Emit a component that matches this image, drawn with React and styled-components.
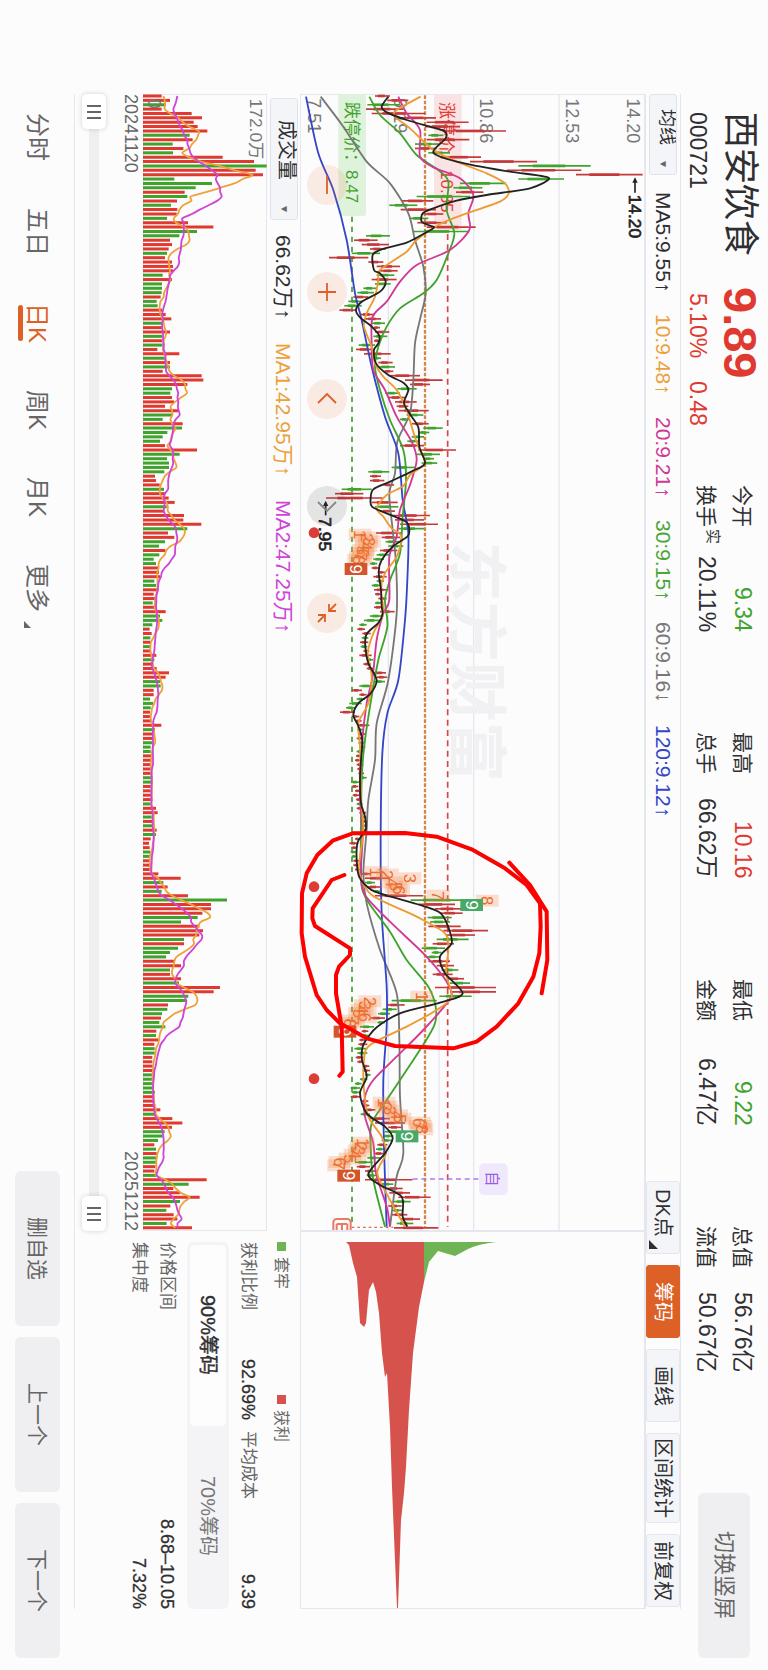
import React, { useState } from 'react';
import styled, { createGlobalStyle, css } from 'styled-components';

const RED = '#e03a30';
const GREEN = '#3fa32c';
const ORANGE = '#dd6126';
const INK = '#2f2f31';
const LINE = '#e6e6ee';

const GlobalStyle = createGlobalStyle`
  *, *::before, *::after { box-sizing: border-box; }
  body { margin: 0; background: #fcfcfd; }
  button, select, input { font: inherit; color: inherit; margin: 0; }
`;

/* The trading screen is a landscape layout, set with vertical lines of sideways text. */
const Page = styled.div`
  writing-mode: vertical-rl;
  text-orientation: sideways;
  display: flex;
  flex-direction: column;
  width: 100vw;
  height: 100vh;
  background: #fcfcfd;
  color: ${INK};
  font-family: 'Liberation Sans', 'Noto Sans CJK SC', sans-serif;
  font-size: 21px;
  line-height: 1;
  white-space: nowrap;
  overflow: hidden;
`;

const Header = styled.header`
  display: flex;
  flex: none;
  block-size: 87px;
  padding-inline: 112px 12px;
`;

const Title = styled.div`
  display: grid;
  grid-template-columns: 175px 198px;
  grid-template-rows: 46px 40px;
  align-items: center;
  padding-block-start: 5px;
`;

const StockName = styled.h1`
  margin: 0;
  font-size: 36px;
  font-weight: 400;
`;

const LastPrice = styled.strong`
  color: ${RED};
  font-size: 47px;
`;

const Code = styled.span`
  font-size: 23px;
`;

const Change = styled.div`
  display: flex;
  gap: 23px;
  padding-inline-start: 6px;
  color: ${RED};
  font-size: 23px;
`;

const Quotes = styled.dl`
  display: flex;
  flex: 1;
  gap: 100px;
  margin: 0;
  padding-block-start: 8px;
`;

const QuotePair = styled.div`
  inline-size: 147px;
`;

const Quote = styled.div`
  display: flex;
  align-items: center;
  justify-content: space-between;
  block-size: 36px;
  dt { display: flex; font-size: 21px; }
  dd { margin: 0; font-size: 23px; color: ${(p) => p.$color || INK}; }
`;

const Flag = styled.small`
  align-self: flex-start;
  margin-block-start: -4px;
  margin-inline-start: 2px;
  font-size: 15px;
`;

const SoftButton = styled.button`
  display: flex;
  align-items: center;
  justify-content: center;
  inline-size: 155px;
  block-size: 45px;
  padding: 0;
  border: 0;
  border-radius: 6px;
  background: #efeff1;
  color: #666;
  font-size: 21px;
  writing-mode: inherit;
`;

const RotateButton = styled(SoftButton)`
  flex: none;
  align-self: flex-start;
  inline-size: 165px;
  block-size: 52px;
  margin-block-start: 18px;
  font-size: 22px;
`;

const Workspace = styled.main`
  display: flex;
  flex: 1;
  flex-direction: column;
  min-block-size: 0;
  margin-inline: 94px 61px;
  border-block-end: 1px solid ${LINE};
`;

const Toolbar = styled.div`
  display: flex;
  flex: none;
  align-items: center;
  justify-content: space-between;
  block-size: 36px;
  border-block: 1px solid ${LINE};
`;

const Legend = styled.div`
  display: flex;
  align-items: center;
  gap: ${(p) => p.$gap || 22}px;
`;

const Reading = styled.span`
  color: ${(p) => p.$color || INK};
`;

const Picker = styled.span`
  position: relative;
  display: flex;
  margin-inline: ${(p) => (p.$inset ? '4px -9px' : '0 -5px')};
  &::after {
    content: '▼';
    position: absolute;
    inset-inline-end: 6px;
    inset-block-start: 9px;
    color: #666;
    font-size: 10px;
    pointer-events: none;
  }
`;

const Select = styled.select`
  appearance: none;
  inline-size: ${(p) => p.$size}px;
  block-size: 28px;
  padding: 0;
  padding-inline-start: ${(p) => p.$start}px;
  border: 1px solid #e1e3e8;
  border-radius: 3px;
  background: #f4f5f8;
  color: ${INK};
  font-size: ${(p) => p.$text}px;
  writing-mode: vertical-rl;
  text-orientation: sideways;
`;

const Tools = styled.div`
  display: flex;
  gap: 11px;
  padding-inline-end: 2px;
`;

const ToolButton = styled.button`
  position: relative;
  display: flex;
  align-items: center;
  justify-content: center;
  inline-size: ${(p) => (p.$wide ? 90 : 73)}px;
  block-size: 34px;
  padding: 0;
  padding-inline-end: ${(p) => (p.$menu ? 10 : 0)}px;
  border: 1px solid #e6e7ec;
  border-radius: 3px;
  background: #f4f5f8;
  color: ${INK};
  font-size: 20px;
  writing-mode: inherit;
  ${(p) => p.$active && css`
    border-color: ${ORANGE};
    background: ${ORANGE};
    color: #fff;
  `}
`;

const Corner = styled.i`
  position: absolute;
  inset-inline-end: 4px;
  inset-block-end: 2px;
  border-style: solid;
  border-width: 9px 0 0 9px;
  border-color: transparent transparent transparent ${INK};
`;

const Body = styled.div`
  display: flex;
  flex: 1;
  min-block-size: 0;
`;

const Charts = styled.section`
  display: flex;
  flex: 1;
  flex-direction: column;
  min-inline-size: 0;
`;

const Chart = styled.div`
  position: relative;
  flex: none;
  block-size: ${(p) => p.$size}px;
  box-shadow: inset 0 0 0 1px ${LINE};
  svg.plot {
    position: absolute;
    inset: 0;
    width: 100%;
    height: 100%;
    overflow: visible;
    writing-mode: horizontal-tb;
    text-orientation: mixed;
  }
`;

const VolumeBar = styled.div`
  display: flex;
  flex: none;
  align-items: center;
  block-size: 33px;
`;

const ChartControls = styled.div`
  position: absolute;
  inset-block-end: -2px;
  inset-inline-start: 71px;
  display: flex;
  gap: 67px;
  padding-block-end: 9px;
`;

const RoundButton = styled.button`
  display: flex;
  align-items: center;
  justify-content: center;
  inline-size: 40px;
  block-size: 40px;
  padding: 0;
  border: 0;
  border-radius: 50%;
  background: ${(p) => (p.$muted ? 'rgba(60,60,60,.12)' : 'rgba(233,120,60,.13)')};
  color: ${(p) => (p.$muted ? '#888' : ORANGE)};
`;

const Dates = styled.div`
  display: flex;
  flex: none;
  align-items: center;
  justify-content: space-between;
  block-size: 24px;
  color: #666;
  font-size: 18px;
`;

const Scroller = styled.div`
  position: relative;
  flex: 1;
  &::before {
    content: '';
    position: absolute;
    inset-block: 20px 14px;
    inset-inline: 10px;
    background: #efeff2;
  }
`;

const Handle = styled.input`
  position: absolute;
  appearance: none;
  inset-inline: 0;
  inset-block-end: 7px;
  inline-size: 100%;
  block-size: 24px;
  background: transparent;
  pointer-events: none;
  writing-mode: vertical-rl;
  &::-webkit-slider-thumb {
    appearance: none;
    width: 24px;
    height: 35px;
    border-radius: 5px;
    background:
      linear-gradient(#666, #666) center 11px / 14px 2px,
      linear-gradient(#666, #666) center 17px / 14px 2px,
      linear-gradient(#666, #666) center 23px / 14px 2px,
      #fff;
    background-repeat: no-repeat;
    box-shadow: 0 0 5px rgba(40, 40, 60, 0.2);
    pointer-events: auto;
  }
`;

const ChipPanel = styled.aside`
  display: flex;
  flex: none;
  flex-direction: column;
  inline-size: 378px;
`;

const Stats = styled.div`
  display: flex;
  flex-direction: column;
  padding-block-start: 10px;
  padding-inline-start: 11px;
  color: #666;
  font-size: 17px;
`;

const ChipLegend = styled.div`
  display: grid;
  grid-template-columns: 153px 1fr;
  block-size: 18px;
  align-items: center;
  margin-block-end: 10px;
  font-size: 16px;
  span { display: flex; align-items: center; gap: 6px; }
`;

const Swatch = styled.i`
  inline-size: 9px;
  block-size: 9px;
  background: ${(p) => p.$color};
`;

const StatRow = styled.dl`
  display: flex;
  align-items: center;
  block-size: 28px;
  margin: 0;
  dt { flex: none; }
  dd { flex: 1; margin: 0; text-align: end; color: ${INK}; font-size: 18px; -webkit-text-stroke: .3px ${INK}; }
  dd + dt { margin-inline-start: 11px; }
`;

const Segments = styled.div`
  display: flex;
  block-size: 42px;
  margin-block: 5px 6px;
  padding: 3px;
  border-radius: 6px;
  background: #f4f4f7;
  font-size: 20px;
`;

const Segment = styled.label`
  position: relative;
  display: flex;
  flex: 1;
  align-items: center;
  justify-content: center;
  border-radius: 5px;
  color: #777;
  input { position: absolute; inset: 0; opacity: 0; }
  ${(p) => p.$active && css`
    background: #fdfdfe;
    color: ${INK};
    -webkit-text-stroke: 0.4px ${INK};
  `}
`;

const Footer = styled.footer`
  display: flex;
  flex: none;
  align-items: center;
  justify-content: space-between;
  block-size: 74px;
  padding-inline: 113px 12px;
`;

const Periods = styled.nav`
  display: flex;
  gap: 47px;
`;

const Period = styled.button`
  position: relative;
  padding: 0;
  border: 0;
  background: none;
  color: ${(p) => (p.$active ? ORANGE : '#666')};
  font-size: 24px;
  line-height: 28px;
  writing-mode: inherit;
  ${(p) => p.$active && css`
    &::after {
      content: '';
      position: absolute;
      inset-block-end: -5px;
      inset-inline: 2px;
      block-size: 5px;
      border-radius: 3px;
      background: ${ORANGE};
    }
  `}
`;

const MoreMark = styled.i`
  position: absolute;
  inset-inline-end: -16px;
  inset-block-end: 1px;
  border-style: solid;
  border-width: 7px 0 0 7px;
  border-color: transparent transparent transparent #666;
`;

const Pager = styled.div`
  display: flex;
  gap: 11px;
`;

/* Daily volume; a minus sign marks a falling day. Three units to the pixel. */
const volume = [
  56, 81, -69, 56, 146, 177, 152, 164, 193, -140, 149, -89, 121, -90, 239, 333, -371, 338, 360, -94,
  -207, -158, 125, -133, 102, -84, 103, 101, -72, 135, 211, -162, -109, 81, 87, 77, -72, 66, 87, 90,
  90, -59, 87, -57, -57, -56, 53, -41, -44, 57, 68, 85, -57, 57, 81, -57, 57, -59, 43, 109,
  -67, 81, -81, 59, 176, 181, 133, -87, -82, 87, 93, 66, 107, -87, -59, 119, -117, -73, -59, -51,
  66, 162, -110, -72, -78, -78, -64, 36, 39, 50, -63, 67, 77, 95, -71, 63, 123, 121, 175, -133,
  75, 94, -66, -48, 67, -49, -32, -39, 46, 48, 51, -34, -39, 43, 32, 36, -29, 33, 68, -51,
  -58, -28, 20, 26, -22, 23, -21, 21, 40, -34, 31, 41, 78, 68, -51, -53, 32, 32, -21, -30,
  -23, 21, 21, 26, 55, -36, 31, 31, -28, -23, -23, 24, 24, 24, 25, 27, -29, -30, 23, 23,
  24, 28, -23, 39, 44, -26, 30, -28, 41, -39, 23, 18, 20, -21, -21, 22, 22, 23, 46, 113,
  -61, 74, -56, 135, -252, 204, 204, 178, -164, -114, 169, 180, 169, -123, 123, -105, -81, -69, 93, 114,
  -81, 81, 114, -108, 231, 212, -136, -129, 75, -73, -57, 54, -49, -67, 40, -39, 46, 34, -35, -35,
  28, 28, 29, 29, -29, -29, -30, -32, -36, 34, 34, 37, 52, -35, 88, 118, 87, -65, -59, -45,
  34, -39, 41, -43, -41, 37, 34, -39, 191, -137, 91, 111, 170, -111, 82, -70, 92, 103, -71, 147,
];

/* Low and high of each day. */
const range = [
  225, 270, 262, 325, 202, 300, 198, 310, 215, 375, 300, 408, 380, 506, 375, 480, 430, 618, 385, 430,
  380, 508, 345, 420, 345, 410, 385, 450, 430, 543, 510, 711, 655, 872, 620, 844, 828, 1028, 655, 792,
  480, 618, 460, 547, 468, 550, 350, 510, 305, 400, 268, 352, 302, 408, 370, 430, 328, 385, 352, 440,
  380, 527, 340, 505, 198, 270, 162, 233, 185, 267, 210, 258, 155, 240, 87, 205, 205, 250, 230, 300,
  240, 293, 230, 283, 215, 290, 225, 272, 190, 230, 172, 222, 160, 205, 145, 190, 133, 185, 118, 170,
  180, 225, 195, 243, 215, 255, 220, 240, 225, 268, 220, 262, 222, 240, 176, 225, 168, 225, 192, 272,
  220, 243, 235, 278, 235, 285, 250, 280, 268, 360, 315, 428, 330, 390, 292, 350, 255, 300, 265, 315,
  285, 350, 290, 325, 295, 386, 320, 370, 300, 328, 335, 386, 370, 428, 355, 388, 335, 372, 322, 358,
  300, 372, 355, 468, 350, 420, 370, 402, 365, 412, 275, 345, 205, 268, 210, 243, 210, 253, 250, 282,
  125, 215, 105, 190, 78, 248, 215, 293, 225, 295, 240, 285, 275, 390, 285, 372, 300, 414, 295, 372,
  228, 305, 245, 300, 257, 300, 265, 310, 240, 292, 230, 270, 220, 252, 210, 232, 215, 240, 235, 255,
  220, 260, 230, 252, 215, 245, 222, 265, 225, 245, 235, 260, 225, 245, 222, 250, 240, 284, 210, 250,
  192, 240, 178, 200, 172, 195, 187, 212, 185, 205, 180, 205, 182, 202, 190, 208, 178, 215, 200, 220,
  190, 213, 200, 222, 222, 258, 230, 262, 225, 255, 178, 222, 155, 186, 178, 200, 170, 195, 148, 185,
  138, 165, 120, 165, 155, 178, 165, 185, 172, 208, 172, 190, 175, 195, 170, 190, 175, 192, 180, 196,
  170, 190, 168, 186, 165, 182, 170, 190, 172, 186, 175, 192, 178, 200, 153, 180, 155, 175, 165, 182,
  158, 178, 168, 186, 170, 188, 170, 190, 178, 198, 185, 200, 185, 202, 186, 200, 186, 200, 178, 195,
  165, 180, 148, 175, 155, 172, 152, 170, 155, 170, 160, 178, 160, 178, 165, 185, 185, 212, 195, 270,
  195, 225, 202, 242, 220, 242, 225, 370, 332, 515, 355, 465, 405, 490, 420, 488, 383, 455, 390, 450,
  385, 482, 430, 564, 440, 525, 410, 506, 398, 462, 365, 435, 395, 425, 380, 420, 385, 450, 410, 462,
  425, 475, 398, 458, 440, 492, 450, 510, 405, 588, 450, 588, 418, 515, 275, 410, 260, 314, 248, 290,
  234, 270, 210, 255, 232, 255, 180, 222, 185, 205, 185, 205, 178, 195, 175, 202, 163, 198, 172, 202,
  167, 190, 172, 192, 188, 208, 188, 210, 195, 212, 180, 202, 165, 185, 152, 180, 155, 180, 152, 182,
  185, 205, 190, 208, 195, 226, 182, 210, 210, 270, 225, 315, 265, 305, 255, 310, 250, 280, 245, 275,
  232, 262, 228, 255, 222, 255, 202, 242, 165, 218, 170, 210, 195, 230, 200, 232, 195, 338, 240, 280,
  260, 308, 268, 330, 295, 392, 280, 332, 265, 305, 275, 308, 275, 322, 300, 360, 290, 340, 282, 415,
];

const averages = [
  ['#777777', [62,50,130,140,200,245,270,310,325,400,345,480,370,560,377,640,362,710,345,790,340,900,330,1000,292,1085,285,1180,268,1240,278,1350,288,1450,290,1600,265,1800,230,1930,225,2040,205,2160,200,2250,190,2380,200,2470,240,2610,290,2740,298,2878,300,3050,310,3220,290,3290,270,3440]],
  ['#3446c8', [18,50,55,220,100,330,140,480,165,640,185,720,215,860,255,1010,295,1120,308,1260,325,1360,322,1500,315,1620,295,1800,262,1900,247,2020,242,2280,245,2500,260,2720,260,2840,250,3000,252,3200,260,3440]],
  [GREEN, [208,50,240,105,300,160,350,225,415,270,445,305,440,390,463,460,445,520,410,600,370,640,300,685,260,740,235,800,225,860,240,930,270,1020,310,1110,318,1200,308,1310,300,1420,270,1500,255,1560,262,1640,235,1740,215,1850,195,1980,185,2100,183,2380,198,2455,270,2555,320,2640,385,2720,407,2780,405,2830,380,2878,340,2940,260,3060,215,3130,212,3200,220,3300,255,3440]],
  ['#cf3a94', [295,50,320,100,360,150,360,230,400,262,480,295,520,345,505,400,508,450,450,510,350,555,300,605,260,665,218,710,215,790,220,870,255,930,290,1010,335,1085,350,1140,330,1215,300,1290,290,1370,268,1430,268,1560,250,1600,230,1680,218,1790,200,1870,185,2000,180,2150,188,2260,183,2380,195,2445,270,2525,370,2620,430,2690,455,2740,440,2770,370,2850,290,2930,220,3000,195,3050,195,3110,220,3190,228,3280,260,3380,270,3440]],
  ['#ee9a30', [362,50,290,90,285,110,330,145,400,210,470,245,560,280,615,310,626,340,600,365,500,400,420,432,350,480,320,515,240,570,235,600,225,650,200,700,192,740,215,800,225,850,250,890,290,930,320,990,335,1040,355,1100,375,1150,330,1185,310,1218,260,1245,230,1285,250,1310,275,1345,305,1370,290,1430,255,1480,243,1530,250,1600,220,1660,203,1720,215,1790,205,1870,175,1930,180,2000,183,2150,190,2250,180,2330,178,2380,215,2445,350,2510,435,2560,445,2610,438,2680,455,2750,410,2790,320,2840,210,2895,192,2940,192,3030,205,3110,245,3170,258,3220,232,3280,270,3360,315,3440]],
  ['#222222', [265,50,245,80,262,98,320,120,400,143,435,155,437,175,400,218,470,245,610,272,725,288,746,298,690,325,560,345,470,362,400,385,368,400,365,425,385,435,402,443,370,462,320,488,245,508,218,525,222,570,240,580,257,605,240,635,185,665,168,690,180,712,215,740,238,768,235,790,222,810,228,850,265,885,310,908,325,930,312,968,328,1000,355,1042,358,1100,375,1150,340,1172,270,1205,220,1228,212,1255,216,1280,260,1300,318,1325,328,1350,322,1370,280,1398,245,1440,236,1475,243,1530,245,1580,248,1600,236,1628,200,1662,196,1700,205,1750,230,1800,212,1840,175,1870,160,1905,175,1938,187,1980,183,2040,180,2100,183,2170,195,2210,197,2250,172,2290,172,2365,183,2400,225,2435,350,2472,420,2498,445,2542,455,2590,420,2630,435,2680,488,2740,420,2768,300,2800,232,2840,205,2870,188,2900,186,2940,200,2990,180,3040,200,3100,255,3140,278,3175,255,3220,205,3282,240,3315,305,3350,308,3410,322,3440]],
];

const STEP = 13.11;

/* Rounded line through a flat list of x, y pairs. */
function curve(flat) {
  const p = [];
  for (let i = 0; i < flat.length; i += 2) p.push([flat[i], flat[i + 1]]);
  let d = `M${p[0]}`;
  for (let i = 0; i < p.length - 1; i++) {
    const a = p[i - 1] || p[i];
    const b = p[i];
    const c = p[i + 1];
    const e = p[i + 2] || c;
    d += `C${b[0] + (c[0] - a[0]) / 7} ${b[1] + (c[1] - a[1]) / 7} ${c[0] - (e[0] - b[0]) / 7} ${c[1] - (e[1] - b[1]) / 7} ${c}`;
  }
  return d;
}

function movingAverage(days, before) {
  const out = [];
  volume.forEach((_, i) => {
    let sum = 0;
    for (let k = i - days + 1; k <= i; k++) sum += k < 0 ? before : Math.abs(volume[k]);
    out.push(sum / days, 6 + i * STEP);
  });
  return out;
}

function Label({ x, y, size = 54, children, ...rest }) {
  return (
    <text transform={`translate(${x} ${y}) rotate(90)`} fontSize={size} fill="#777" {...rest}>
      {children}
    </text>
  );
}

function Mark({ x, y, digit, fill }) {
  return (
    <g>
      <rect x={x - 34} y={y - 18} width="68" height="36" fill={fill || '#f58a4b'} opacity={fill ? 1 : 0.27} />
      <Label x={x - 18} y={y} size={50} textAnchor="middle" fill={fill ? '#fff' : '#ec6a2c'}>{digit}</Label>
    </g>
  );
}

const marks = [
  [180, 1364, 1], [200, 1373, 2], [208, 1385, 3], [198, 1398, 4], [190, 1410, 5], [188, 1420, 6], [182, 1430, 7], [176, 1440, 8],
  [228, 2376, 1], [262, 2384, 2], [330, 2395, 3], [275, 2408, 4], [288, 2420, 5], [296, 2430, 6], [415, 2447, 7], [562, 2462, 8],
  [365, 2750, 1], [210, 2764, 2], [196, 2776, 3], [186, 2788, 4], [178, 2800, 5], [196, 2812, 6], [160, 2822, 7], [150, 2830, 8],
  [252, 3068, 1], [258, 3080, 2], [270, 3092, 3], [290, 3106, 4], [300, 3116, 5], [358, 3128, 6], [362, 3138, 7], [366, 3148, 8],
  [190, 3188, 1], [184, 3200, 2], [178, 3212, 3], [165, 3224, 4], [150, 3236, 5], [120, 3246, 6], [116, 3256, 7],
];

function PricePlot() {
  return (
    <svg className="plot" viewBox="0 42 1035 3411" preserveAspectRatio="xMinYMin meet" role="img" aria-label="日K线图">
      <g stroke={LINE} strokeWidth="4">
        {[265, 521, 777].map((x) => <path key={x} d={`M${x} 42V3453`} />)}
        <path d="M417 2780V3453" />
      </g>
      <Label x={464} y={1385} size={180} fill="#f1f1f3" fontWeight="700">东方财富</Label>
      <Label x={980} y={55}>14.20</Label>
      <Label x={797} y={55}>12.53</Label>
      <Label x={540} y={55}>10.86</Label>
      <Label x={283} y={55}>9.19</Label>
      <Label x={25} y={55}>7.51</Label>
      <rect x="402" y="42" width="83" height="408" fill="#fae3e4" />
      <rect x="115" y="42" width="83" height="366" rx="8" fill="#dff2dc" />
      <Label x={424} y={66} size={51} fill={RED}>涨停价：10.35</Label>
      <Label x={137} y={66} size={51} fill={GREEN}>跌停价：8.47</Label>
      <path d="M443 462V3440" stroke="#d84545" strokeWidth="5" strokeDasharray="18 13" />
      <path d="M156 410V3440" stroke={GREEN} strokeWidth="5" strokeDasharray="16 14" />
      <path d="M375 46V3440" stroke="#d2874a" strokeWidth="7" strokeDasharray="11 5" />
      {volume.map((v, i) => {
        const lo = range[i * 2];
        const hi = range[i * 2 + 1];
        const y = 48 + i * STEP;
        const color = v > 0 ? '#c43a3a' : GREEN;
        return (
          <g key={i} stroke={color}>
            <path d={`M${lo} ${y}H${hi}`} strokeWidth="5" />
            <path d={`M${lo + (hi - lo) * 0.2} ${y}H${hi - (hi - lo) * 0.35}`} strokeWidth="8" />
          </g>
        );
      })}
      {averages.map(([color, points]) => (
        <path key={color} d={curve(points)} fill="none" stroke={color} strokeWidth="5.5" strokeLinejoin="round" />
      ))}
      {marks.map(([x, y, digit]) => <Mark key={y} x={x} y={y} digit={digit} />)}
      <Mark x={168} y={1467} digit={9} fill="#d4552c" />
      <Mark x={135} y={2855} digit={9} fill="#d4552c" />
      <Mark x={146} y={3287} digit={9} fill="#d4552c" />
      <Mark x={515} y={2475} digit={9} fill="#48a866" />
      <Mark x={321} y={3169} digit={9} fill="#48a866" />
      <g fill="#222">
        <path d="M1005 302V338" stroke="#222" strokeWidth="5" />
        <path d="M1005 292l-8 16h16z" />
        <Label x={987} y={344} size={52} fill="#222" stroke="#222" strokeWidth="2">14.20</Label>
        <path d="M77 1270V1306" stroke="#222" strokeWidth="5" />
        <path d="M77 1262l-8 16h16z" />
        <Label x={58} y={1312} size={52} fill="#222" stroke="#222" strokeWidth="2">7.95</Label>
      </g>
      {[1358, 2420, 2996].map((y) => <circle key={y} cx="42" cy={y} r="16" fill="#dc3c35" />)}
      <path d="M338 3297H537" stroke="#ad7bf0" strokeWidth="5" strokeDasharray="15 11" />
      <rect x="537" y="3250" width="86" height="95" rx="14" fill="#f0e9fc" />
      <Label x={561} y={3297} size={46} textAnchor="middle" fill="#9b5de8">自</Label>
      <path d="M155 3442H280" stroke="#e06a55" strokeWidth="4" strokeDasharray="8 9" />
      <path d="M100 3450V3427a10 10 0 0 1 10-10h32a10 10 0 0 1 10 10v23M110 3432h32M126 3432v18M110 3432v18M142 3432v18" fill="none" stroke="#ea7a66" strokeWidth="6" />
      <g fill="none" stroke="#fb0200" strokeWidth="12" strokeLinecap="round" strokeLinejoin="round">
        <path d="M20 2380L52 2325 98 2282 158 2260 315 2259 410 2270 515 2308 615 2365 680 2415 720 2470 722 2540 718 2620 700 2690 655 2770 590 2840 530 2885 460 2905 285 2898 200 2875 120 2830 80 2790 50 2745 15 2630 5 2560 6 2440z" />
        <path d="M628 2348L690 2415 740 2495 742 2640 725 2740" />
        <path d="M133 2385L95 2400 38 2485 37 2515 45 2538 150 2605 150 2625 117 2660 108 2685 108 2740 125 2840 128 2975 118 2987" />
      </g>
    </svg>
  );
}

function VolumePlot() {
  return (
    <svg className="plot" viewBox="0 0 372 3411" preserveAspectRatio="xMinYMin meet" role="img" aria-label="成交量图">
      <Label x={320} y={14} size={52}>172.0万</Label>
      {volume.map((v, i) => (
        <path key={i} d={`M0 ${6 + i * STEP}H${Math.abs(v)}`} stroke={v > 0 ? RED : GREEN} strokeWidth="9" />
      ))}
      <Label x={14} y={14}>0</Label>
      <path d={curve(movingAverage(5, 63))} fill="none" stroke="#eea23c" strokeWidth="5.5" />
      <path d={curve(movingAverage(10, 108))} fill="none" stroke="#cf45d8" strokeWidth="5.5" />
    </svg>
  );
}

function ChipPlot() {
  return (
    <svg className="plot" viewBox="300 1231 345 378" preserveAspectRatio="xMinYMin meet" role="img" aria-label="筹码分布">
      <path fill="#d5524d" d="M346 1242L349 1245 353 1263 357 1277 360 1323 362 1325 364 1327 366 1323 369 1290 373 1282 376 1292 379 1313 382 1353 385 1377 387 1373 390 1427 392 1487 395 1560 397 1608H398L401 1520 404 1493 406 1467 409 1410 413 1353 419 1307 424 1282V1242z" />
      <path fill="#70b354" d="M424 1242H496Q478 1244 468 1249L455 1256 438 1251 429 1262 424 1282z" />
    </svg>
  );
}

const icons = [
  ['缩小', 'M10 1v18'],
  ['放大', 'M10 1v18M1 10h18'],
  ['左移', 'M1 14l9-9 9 9'],
  ['右移', 'M1 6l9 9 9-9'],
  ['收起', 'M19 1l-7 7M12 1v7h7M1 19l7-7M1 12h7v7'],
];

const legend = [
  ['MA5:9.55↑', INK], ['10:9.48↑', '#eda13c'], ['20:9.21↑', '#cf3a94'],
  ['30:9.15↑', '#4aa636'], ['60:9.16↓', '#777'], ['120:9.12↑', '#3446c8'],
];

const quotes = [
  [['今开', '9.34', GREEN], ['换手', '20.11%', null, '实']],
  [['最高', '10.16', RED], ['总手', '66.62万']],
  [['最低', '9.22', GREEN], ['金额', '6.47亿']],
  [['总值', '56.76亿'], ['流值', '50.67亿']],
];

export default function App() {
  const [period, setPeriod] = useState('日K');
  const [share, setShare] = useState('90');
  return (
    <Page>
      <GlobalStyle />
      <Header>
        <Title>
          <StockName>西安饮食</StockName>
          <LastPrice>9.89</LastPrice>
          <Code>000721</Code>
          <Change><span>5.10%</span><span>0.48</span></Change>
        </Title>
        <Quotes>
          {quotes.map((pair) => (
            <QuotePair key={pair[0][0]}>
              {pair.map(([name, value, color, flag]) => (
                <Quote key={name} $color={color}>
                  <dt>{name}{flag && <Flag>{flag}</Flag>}</dt>
                  <dd>{value}</dd>
                </Quote>
              ))}
            </QuotePair>
          ))}
        </Quotes>
        <RotateButton>切换竖屏</RotateButton>
      </Header>
      <Workspace>
        <Toolbar>
          <Legend>
            <Picker>
              <Select aria-label="主图指标" $size={81} $start={14} $text={18}><option>均线</option></Select>
            </Picker>
            {legend.map(([text, color]) => <Reading key={text} $color={color}>{text}</Reading>)}
          </Legend>
          <Tools>
            <ToolButton $menu>DK点<Corner /></ToolButton>
            <ToolButton $active>筹码</ToolButton>
            <ToolButton>画线</ToolButton>
            <ToolButton $wide>区间统计</ToolButton>
            <ToolButton>前复权</ToolButton>
          </Tools>
        </Toolbar>
        <Body>
          <Charts>
            <Chart $size={345}>
              <PricePlot />
              <ChartControls>
                {icons.map(([name, d], i) => (
                  <RoundButton key={name} aria-label={name} $muted={i === 3}>
                    <svg width="20" height="20" viewBox="0 0 20 20" fill="none" stroke="currentColor" strokeWidth="1.8"><path d={d} /></svg>
                  </RoundButton>
                ))}
              </ChartControls>
            </Chart>
            <VolumeBar>
              <Legend $gap={24}>
                <Picker $inset>
                  <Select aria-label="副图指标" $size={122} $start={21} $text={20}><option>成交量</option></Select>
                </Picker>
                <Reading>66.62万↑</Reading>
                <Reading $color="#eda13c">MA1:42.95万↑</Reading>
                <Reading $color="#cf45d8">MA2:47.25万↑</Reading>
              </Legend>
            </VolumeBar>
            <Chart $size={124}><VolumePlot /></Chart>
            <Dates><time>20241120</time><time>20251212</time></Dates>
            <Scroller>
              <Handle type="range" aria-label="开始日期" min="0" max="100" defaultValue="0" />
              <Handle type="range" aria-label="结束日期" min="0" max="100" defaultValue="100" />
            </Scroller>
          </Charts>
          <ChipPanel>
            <Chart $size={345}><ChipPlot /></Chart>
            <Stats>
              <ChipLegend>
                <span><Swatch $color="#70b354" />套牢</span>
                <span><Swatch $color="#d5524d" />获利</span>
              </ChipLegend>
              <StatRow>
                <dt>获利比例</dt><dd>92.69%</dd>
                <dt>平均成本</dt><dd>9.39</dd>
              </StatRow>
              <Segments role="radiogroup" aria-label="筹码范围">
                {['90', '70'].map((n) => (
                  <Segment key={n} $active={share === n}>
                    <input type="radio" name="share" checked={share === n} onChange={() => setShare(n)} />
                    {n}%筹码
                  </Segment>
                ))}
              </Segments>
              <StatRow><dt>价格区间</dt><dd>8.68–10.05</dd></StatRow>
              <StatRow><dt>集中度</dt><dd>7.32%</dd></StatRow>
            </Stats>
          </ChipPanel>
        </Body>
      </Workspace>
      <Footer>
        <Periods>
          {['分时', '五日', '日K', '周K', '月K', '更多'].map((name) => (
            <Period key={name} $active={name === period} onClick={() => setPeriod(name)}>
              {name}{name === '更多' && <MoreMark />}
            </Period>
          ))}
        </Periods>
        <Pager>
          <SoftButton>删自选</SoftButton>
          <SoftButton>上一个</SoftButton>
          <SoftButton>下一个</SoftButton>
        </Pager>
      </Footer>
    </Page>
  );
}
